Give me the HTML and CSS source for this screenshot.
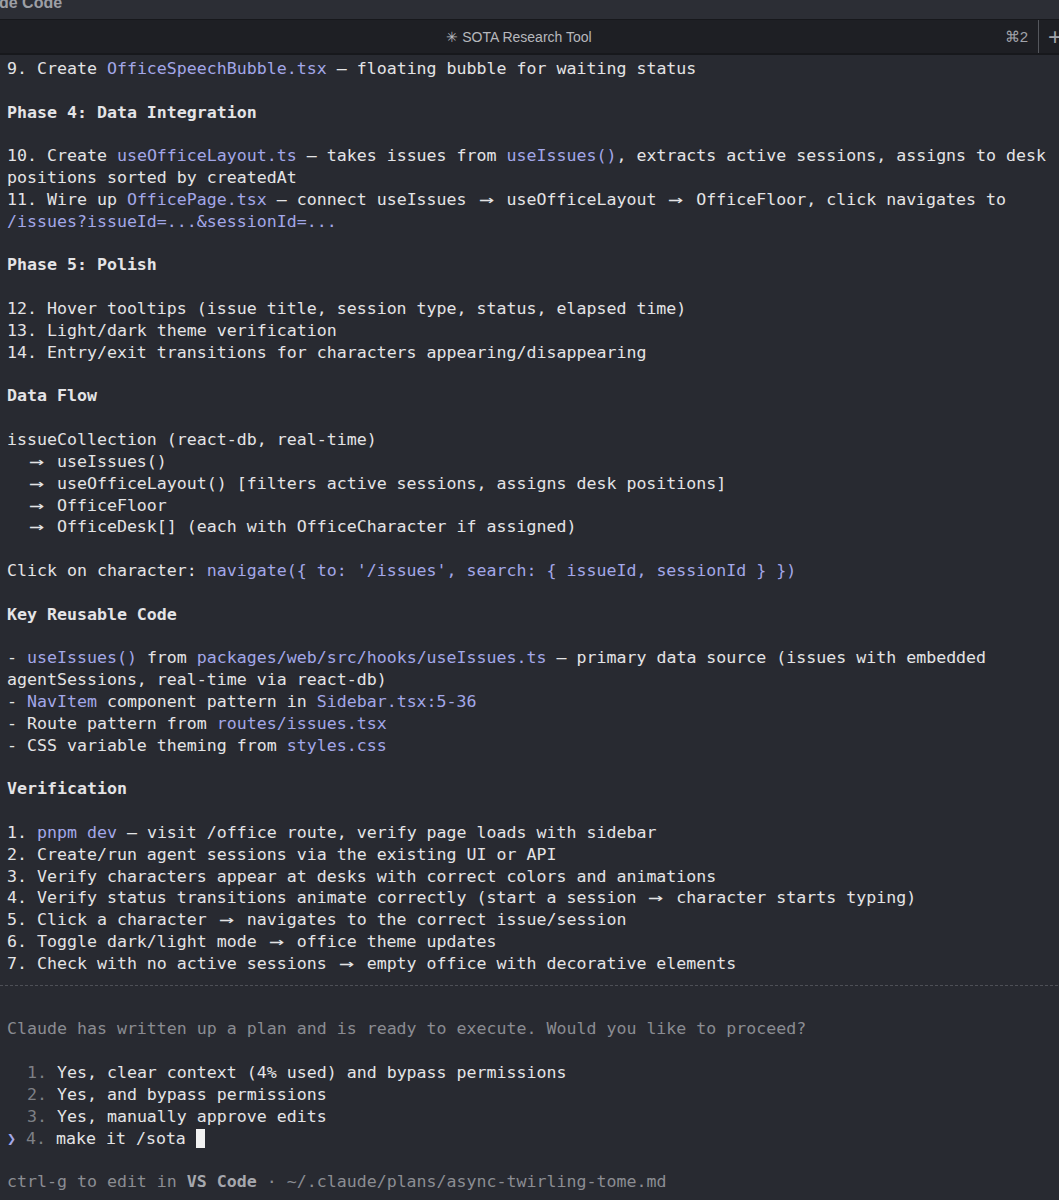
FILE: index.html
```html
<!DOCTYPE html>
<html lang="en">
<head>
<meta charset="utf-8">
<title>Claude Code</title>
<link rel="stylesheet" href="styles.css">
</head>
<body>
<div class="window">
  <div class="titlebar"><span class="app-name">de Code</span></div>
  <div class="tabbar">
    <div class="tab">
      <span></span>
      <span class="tab-title">✳ SOTA Research Tool</span>
      <span class="tab-key">⌘2</span>
    </div>
    <div class="tab-divider"></div>
    <div class="tab-plus">+</div>
  </div>
  <div class="term">
    <div class="ln">9. Create <span class="hl">OfficeSpeechBubble.tsx</span> — floating bubble for waiting status</div>
    <div class="ln"></div>
    <div class="ln b">Phase 4: Data Integration</div>
    <div class="ln"></div>
    <div class="ln">10. Create <span class="hl">useOfficeLayout.ts</span> — takes issues from <span class="hl">useIssues()</span>, extracts active sessions, assigns to desk</div>
    <div class="ln">positions sorted by createdAt</div>
    <div class="ln">11. Wire up <span class="hl">OfficePage.tsx</span> — connect useIssues <span class="arr">→</span> useOfficeLayout <span class="arr">→</span> OfficeFloor, click navigates to</div>
    <div class="ln hl">/issues?issueId=...&amp;sessionId=...</div>
    <div class="ln"></div>
    <div class="ln b">Phase 5: Polish</div>
    <div class="ln"></div>
    <div class="ln">12. Hover tooltips (issue title, session type, status, elapsed time)</div>
    <div class="ln">13. Light/dark theme verification</div>
    <div class="ln">14. Entry/exit transitions for characters appearing/disappearing</div>
    <div class="ln"></div>
    <div class="ln b">Data Flow</div>
    <div class="ln"></div>
    <div class="ln">issueCollection (react-db, real-time)</div>
    <div class="ln">  <span class="arr">→</span> useIssues()</div>
    <div class="ln">  <span class="arr">→</span> useOfficeLayout() [filters active sessions, assigns desk positions]</div>
    <div class="ln">  <span class="arr">→</span> OfficeFloor</div>
    <div class="ln">  <span class="arr">→</span> OfficeDesk[] (each with OfficeCharacter if assigned)</div>
    <div class="ln"></div>
    <div class="ln">Click on character: <span class="hl">navigate({ to: '/issues', search: { issueId, sessionId } })</span></div>
    <div class="ln"></div>
    <div class="ln b">Key Reusable Code</div>
    <div class="ln"></div>
    <div class="ln">- <span class="hl">useIssues()</span> from <span class="hl">packages/web/src/hooks/useIssues.ts</span> — primary data source (issues with embedded</div>
    <div class="ln">agentSessions, real-time via react-db)</div>
    <div class="ln">- <span class="hl">NavItem</span> component pattern in <span class="hl">Sidebar.tsx:5-36</span></div>
    <div class="ln">- Route pattern from <span class="hl">routes/issues.tsx</span></div>
    <div class="ln">- CSS variable theming from <span class="hl">styles.css</span></div>
    <div class="ln"></div>
    <div class="ln b">Verification</div>
    <div class="ln"></div>
    <div class="ln">1. <span class="hl">pnpm dev</span> — visit /office route, verify page loads with sidebar</div>
    <div class="ln">2. Create/run agent sessions via the existing UI or API</div>
    <div class="ln">3. Verify characters appear at desks with correct colors and animations</div>
    <div class="ln">4. Verify status transitions animate correctly (start a session <span class="arr">→</span> character starts typing)</div>
    <div class="ln">5. Click a character <span class="arr">→</span> navigates to the correct issue/session</div>
    <div class="ln">6. Toggle dark/light mode <span class="arr">→</span> office theme updates</div>
    <div class="ln">7. Check with no active sessions <span class="arr">→</span> empty office with decorative elements</div>
    <div class="ln rule"><div class="dash"></div></div>
    <div class="ln"></div>
    <div class="ln dim">Claude has written up a plan and is ready to execute. Would you like to proceed?</div>
    <div class="ln"></div>
    <div class="ln">  <span class="num">1.</span> Yes, clear context (4% used) and bypass permissions</div>
    <div class="ln">  <span class="num">2.</span> Yes, and bypass permissions</div>
    <div class="ln">  <span class="num">3.</span> Yes, manually approve edits</div>
    <div class="ln"><span class="ptr">❯</span> <span class="num">4.</span> make it /sota <span class="cursor"></span></div>
    <div class="ln"></div>
    <div class="ln dim">ctrl-g to edit in <span class="strong">VS Code</span> · ~/.claude/plans/async-twirling-tome.md</div>
  </div>
</div>
</body>
</html>
```

FILE: styles.css
```css
html, body {
  margin: 0;
  padding: 0;
  background: #282a31;
}

.window {
  width: 1059px;
  height: 1200px;
  overflow: hidden;
  background: #282a31;
}

.titlebar {
  height: 19px;
  background: #2c2e35;
  overflow: hidden;
  border-bottom: 1px solid #17181c;
}

.app-name {
  display: block;
  margin-top: -7px;
  margin-left: -1px;
  font-family: "Liberation Sans", Arial, sans-serif;
  font-weight: bold;
  font-size: 16px;
  line-height: 20px;
  color: #9d9fa5;
}

.tabbar {
  display: flex;
  height: 33px;
  background: #1e1f24;
  border-bottom: 2px solid #17181c;
}

.tab {
  flex: 1;
  display: grid;
  grid-template-columns: 1fr auto 1fr;
  align-items: center;
  font-family: "Liberation Sans", Arial, sans-serif;
  font-size: 14px;
}

.tab-title {
  color: #b6b8bd;
}

.tab-key {
  justify-self: end;
  padding-right: 10px;
  color: #a2a4aa;
  font-size: 15px;
}

.tab-divider {
  width: 1px;
  background: #55575d;
}

.tab-plus {
  width: 11px;
  padding-left: 9px;
  display: flex;
  align-items: center;
  overflow: hidden;
  font-family: "Liberation Sans", Arial, sans-serif;
  font-size: 24px;
  font-weight: 300;
  color: #a2a4aa;
}

.term {
  padding: 3px 0 0 7px;
  font-family: "DejaVu Sans Mono", "Liberation Mono", monospace;
  font-size: 16.6px;
  color: #e4e4e6;
}

.ln {
  height: 21.83px;
  line-height: 21.83px;
  white-space: pre;
}

.b {
  font-weight: bold;
}

.hl {
  color: #a3a7e8;
}

.arr {
  display: inline-block;
  width: 2ch;
  text-align: center;
  transform: scaleX(1.5);
}

.rule {
  display: flex;
  align-items: center;
  margin-left: -7px;
}

.dash {
  flex: 1;
  height: 1px;
  background: repeating-linear-gradient(90deg, #4e5057 0 3px, transparent 3px 5px);
}

.dim {
  color: #8b8d93;
}

.strong {
  font-weight: bold;
  color: #a6a8ae;
}

.num {
  color: #7e8086;
}

.ptr {
  display: inline-block;
  width: 1ch;
  color: #a3a7e8;
  font-size: 15px;
  font-weight: bold;
}

.cursor {
  display: inline-block;
  width: 9px;
  height: 19px;
  vertical-align: -4px;
  background: #f2f2f2;
}
```
